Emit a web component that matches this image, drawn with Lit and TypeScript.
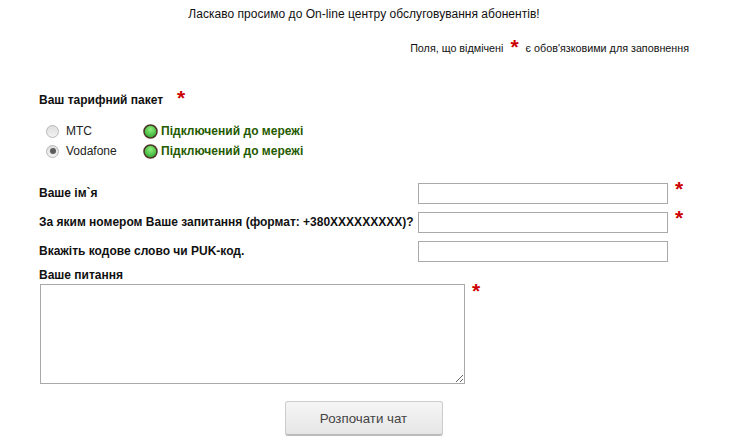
import { LitElement, html, css } from "lit";
import { customElement } from "lit/decorators.js";

@customElement("app-root")
export class AppRoot extends LitElement {
  static styles = css`
    :host {
      display: block;
      width: 733px;
      height: 447px;
      overflow: hidden;
      background: #fff;
      color: #111;
      font-family: "Liberation Sans", Arial, sans-serif;
      font-size: 12px;
      box-sizing: border-box;
    }
    .welcome {
      padding-top: 7px;
      height: 15px;
      line-height: 15px;
      text-align: center;
      padding-right: 5px;
      letter-spacing: 0.03px;
    }
    .note {
      display: flex;
      justify-content: flex-end;
      align-items: center;
      margin-top: 15px;
      padding-right: 44px;
      height: 22px;
      font-size: 10.75px;
    }
    .note .star { margin: 0 7px; position: relative; top: -2px; }
    .star {
      color: #c00;
      font-weight: bold;
      font-size: 21px;
      line-height: 15px;
      height: 15px;
      display: inline-block;
      font-family: "Liberation Sans", Arial, sans-serif;
    }
    .section {
      display: flex;
      align-items: center;
      margin-top: 31px;
      padding-left: 39px;
      height: 20px;
      font-weight: bold;
    }
    .section .star { margin-left: 14px; position: relative; top: -3px; }
    .operators {
      margin-top: 11px;
      padding-left: 46px;
      display: grid;
      grid-template-rows: 20px 20px;
    }
    .op { display: flex; align-items: center; }
    .radio {
      width: 13px;
      height: 13px;
      border-radius: 50%;
      border: 1px solid #b8b8b8;
      background: linear-gradient(#dedede, #f2f2f2);
      box-sizing: border-box;
      display: flex;
      align-items: center;
      justify-content: center;
    }
    .radio.on::after {
      content: "";
      width: 6px;
      height: 6px;
      border-radius: 50%;
      background: #5c5c5c;
    }
    .op-name { width: 77px; margin-left: 7px; color: #222; }
    .lamp { width: 15px; height: 15px; display: block; }
    .status { margin-left: 3px; font-weight: bold; color: #255a00; letter-spacing: 0.03px; }
    .fields { margin-top: 22px; }
    .row {
      display: flex;
      align-items: center;
      height: 21px;
      margin-bottom: 8px;
    }
    .row label { width: 379px; margin-left: 39px; margin-bottom: 2px; font-weight: bold; }
    .row input {
      width: 250px;
      height: 21px;
      box-sizing: border-box;
      border: 1px solid #a9a9a9;
      background: #fff;
      margin: 0;
      padding: 0;
    }
    .row .star { margin-left: 7px; position: relative; top: -5px; }
    .q-label { padding-left: 39px; font-weight: bold; height: 14px; line-height: 14px; margin-top: -2px; }
    .q-row { display: flex; align-items: flex-start; padding-left: 40px; margin-top: 2px; }
    textarea {
      display: block;
      width: 425px;
      height: 100px;
      box-sizing: border-box;
      border: 1px solid #a9a9a9;
      margin: 0;
      padding: 0;
      resize: both;
    }
    .q-row .star { margin-left: 7px; margin-top: -1px; }
    .actions { display: flex; justify-content: center; padding-right: 6px; margin-top: 17px; }
    button {
      width: 158px;
      height: 35px;
      box-sizing: border-box;
      border: 1px solid #ccc;
      border-bottom: 2px solid #bbb;
      border-radius: 3px;
      background: linear-gradient(#f6f6f6, #e6e6e6);
      font: 13.3px "Liberation Sans", Arial, sans-serif;
      color: #444;
      padding: 0;
    }
  `;

  private lamp() {
    return html`<svg class="lamp" viewBox="0 0 15 15">
      <defs>
        <radialGradient id="g" cx="50%" cy="35%" r="65%">
          <stop offset="0" stop-color="#8fef7f"></stop>
          <stop offset="1" stop-color="#2fa82f"></stop>
        </radialGradient>
      </defs>
      <circle cx="7.5" cy="7.5" r="6.5" fill="url(#g)" stroke="#4f3328" stroke-width="1.5"></circle>
    </svg>`;
  }

  render() {
    const star = html`<span class="star">*</span>`;
    return html`
      <div class="welcome">Ласкаво просимо до On-line центру обслуговування абонентів!</div>
      <div class="note"><span>Поля, що відмічені</span>${star}<span>є обов'язковими для заповнення</span></div>
      <div class="section">Ваш тарифний пакет ${star}</div>
      <div class="operators">
        <div class="op">
          <span class="radio"></span><span class="op-name">МТС</span>${this.lamp()}
          <span class="status">Підключений до мережі</span>
        </div>
        <div class="op">
          <span class="radio on"></span><span class="op-name">Vodafone</span>${this.lamp()}
          <span class="status">Підключений до мережі</span>
        </div>
      </div>
      <div class="fields">
        <div class="row"><label>Ваше ім\`я</label><input type="text" />${star}</div>
        <div class="row"><label>За яким номером Ваше запитання (формат: +380XXXXXXXXX)?</label><input type="text" />${star}</div>
        <div class="row"><label>Вкажіть кодове слово чи PUK-код.</label><input type="text" /></div>
      </div>
      <div class="q-label">Ваше питання</div>
      <div class="q-row"><textarea></textarea>${star}</div>
      <div class="actions"><button>Розпочати чат</button></div>
    `;
  }
}
